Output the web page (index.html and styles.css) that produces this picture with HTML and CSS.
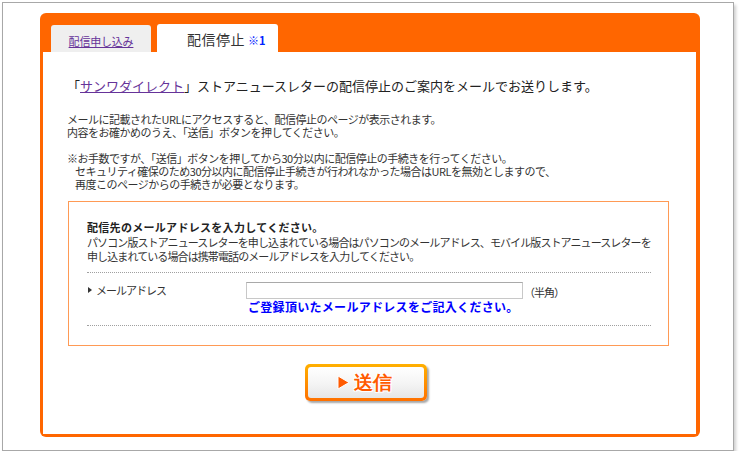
FILE: index.html
```html
<!DOCTYPE html>
<html lang="ja">
<head>
<meta charset="utf-8">
<title>配信停止</title>
<link rel="stylesheet" href="styles.css">
</head>
<body>
<div class="frame">
  <div class="panel">
    <div class="tabs">
      <div class="tab tab-off"><a href="#" class="tab-link">配信申し込み</a></div>
      <div class="tab tab-on"><span class="tab-title">配信停止</span><span class="tab-note">※1</span></div>
    </div>
    <div class="content">
      <h1 class="lead">「<a href="#" class="brand">サンワダイレクト</a>」ストアニュースレターの配信停止のご案内をメールでお送りします。</h1>
      <div class="para">
        <div>メールに記載されたURLにアクセスすると、配信停止のページが表示されます。</div>
        <div>内容をお確かめのうえ、「送信」ボタンを押してください。</div>
      </div>
      <div class="para para2">
        <div>※お手数ですが、「送信」ボタンを押してから30分以内に配信停止の手続きを行ってください。</div>
        <div class="indent">セキュリティ確保のため30分以内に配信停止手続きが行われなかった場合はURLを無効としますので、</div>
        <div class="indent">再度このページからの手続きが必要となります。</div>
      </div>
      <div class="formbox">
        <div class="fb-title">配信先のメールアドレスを入力してください。</div>
        <div class="fb-desc">
          <div>パソコン版ストアニュースレターを申し込まれている場合はパソコンのメールアドレス、モバイル版ストアニュースレターを</div>
          <div>申し込まれている場合は携帯電話のメールアドレスを入力してください。</div>
        </div>
        <div class="fb-row">
          <div class="fb-label"><span class="arrow"></span>メールアドレス</div>
          <div class="fb-field">
            <div class="fb-inputline"><input type="text" class="fb-input"><span class="fb-hint">（半角）</span></div>
            <div class="fb-note">ご登録頂いたメールアドレスをご記入ください。</div>
          </div>
        </div>
      </div>
      <div class="actions">
        <button type="button" class="send">
          <span class="send-inner">
            <svg class="send-tri" width="13" height="15" viewBox="0 0 13 15"><polygon points="1,1 12,7.5 1,14" fill="#ff5a00" stroke="#fff" stroke-width="1"/></svg>
            <span class="send-text">送信</span>
          </span>
        </button>
      </div>
    </div>
  </div>
</div>
</body>
</html>
```
FILE: styles.css
```css
* { box-sizing: border-box; }
html, body { margin: 0; padding: 0; background: #fff; }
body {
  font-family: "Noto Sans CJK JP", "Noto Sans", sans-serif;
  color: #333;
}
.frame {
  margin: 2px 0 0 2px;
  width: 732px;
  height: 449px;
  border: 1px solid #a8a8a8;
  background: #fff;
  box-shadow: 2px 3px 3px #cfcfcf;
  padding: 10px 0 0 37px;
}
.panel {
  width: 660px;
  height: 424px;
  background: #ff6600;
  border-radius: 6px;
  padding: 0 4px 3px 3px;
  display: flex;
  flex-direction: column;
}
.tabs {
  height: 39px;
  display: flex;
  align-items: flex-end;
  padding-left: 8px;
  gap: 6px;
}
.tab {
  border-radius: 3px 3px 0 0;
}
.tab-off {
  width: 100px;
  height: 27px;
  background: #efefef;
  display: flex;
  justify-content: center;
  padding-top: 8px;
}
.tab-link {
  font-size: 11px;
  line-height: 16px;
  color: #663399;
  letter-spacing: -0.2px;
}
.tab-on {
  width: 121px;
  height: 28px;
  background: #fff;
  padding: 6px 0 0 30px;
  display: flex;
  align-items: baseline;
}
.tab-title {
  font-size: 14px;
  line-height: 18px;
  color: #333;
  letter-spacing: 0.5px;
}
.tab-note {
  font-size: 11px;
  font-weight: bold;
  color: #0022ff;
  margin-left: 3px;
}
.content {
  flex: 1;
  background: #fff;
  padding: 25px 26px 0 24px;
}
.lead {
  margin: 0 0 18px 0;
  font-size: 13px;
  line-height: 18px;
  font-weight: normal;
  color: #222;
  white-space: nowrap;
}
.brand { color: #663399; }
.para {
  font-size: 11px;
  line-height: 13px;
  letter-spacing: -0.5px;
  white-space: nowrap;
  color: #333;
}
.para2 { margin-top: 13px; }
.indent { padding-left: 8px; }
.formbox {
  margin: 10px 0 0 1px;
  width: 601px;
  height: 145px;
  border: 1px solid #ff9a55;
  padding: 17px 17px 0 18px;
}
.fb-title {
  font-size: 11px;
  line-height: 16px;
  font-weight: bold;
  letter-spacing: 0.3px;
  color: #222;
}
.fb-desc {
  font-size: 11px;
  line-height: 14px;
  letter-spacing: -0.9px;
  white-space: nowrap;
  color: #333;
  padding-bottom: 9px;
  border-bottom: 1px dotted #a0a0a0;
}
.fb-row {
  display: flex;
  padding: 9px 0 11px 0;
  border-bottom: 1px dotted #a0a0a0;
}
.fb-label {
  width: 159px;
  font-size: 11px;
  line-height: 14px;
  letter-spacing: -1px;
  color: #333;
  padding-top: 1px;
  display: flex;
  align-items: center;
  align-self: flex-start;
  height: 14px;
}
.arrow {
  width: 0;
  height: 0;
  border-left: 4px solid #333;
  border-top: 3px solid transparent;
  border-bottom: 3px solid transparent;
  margin: 0 4px 0 1px;
}
.fb-inputline {
  display: flex;
  align-items: center;
}
.fb-input {
  width: 277px;
  height: 17px;
  margin: 0;
  border: 1px solid #c8c8c8;
  border-top-color: #a9a9a9;
  background: #fff;
  padding: 0 2px;
}
.fb-hint {
  font-size: 11px;
  line-height: 14px;
  letter-spacing: -1px;
  margin-left: 1px;
  color: #333;
  padding-top: 2px;
}
.fb-note {
  font-size: 12px;
  line-height: 14px;
  font-weight: bold;
  color: #0000ff;
  letter-spacing: 0.3px;
  padding: 1px 0 0 2px;
}
.actions {
  padding: 18px 0 0 238px;
}
.send {
  width: 122px;
  height: 37px;
  margin: 0;
  padding: 3px;
  border: 0;
  border-radius: 5px;
  background: linear-gradient(#ffb000, #ff7000);
  box-shadow: 2px 2px 2px rgba(0, 0, 0, 0.35);
  display: block;
}
.send-inner {
  display: flex;
  align-items: center;
  justify-content: center;
  width: 100%;
  height: 100%;
  border-radius: 3px;
  background: linear-gradient(#ffffff, #f4f4f4 55%, #e6e6e6);
  padding-right: 4px;
}
.send-tri { margin-right: 4px; }
.send-text {
  font-size: 19px;
  line-height: 22px;
  font-weight: bold;
  color: #ff5a00;
  text-shadow: -1px -1px 0 #fff, 1px -1px 0 #fff, -1px 1px 0 #fff, 1px 1px 0 #fff;
  letter-spacing: 0;
}
```
